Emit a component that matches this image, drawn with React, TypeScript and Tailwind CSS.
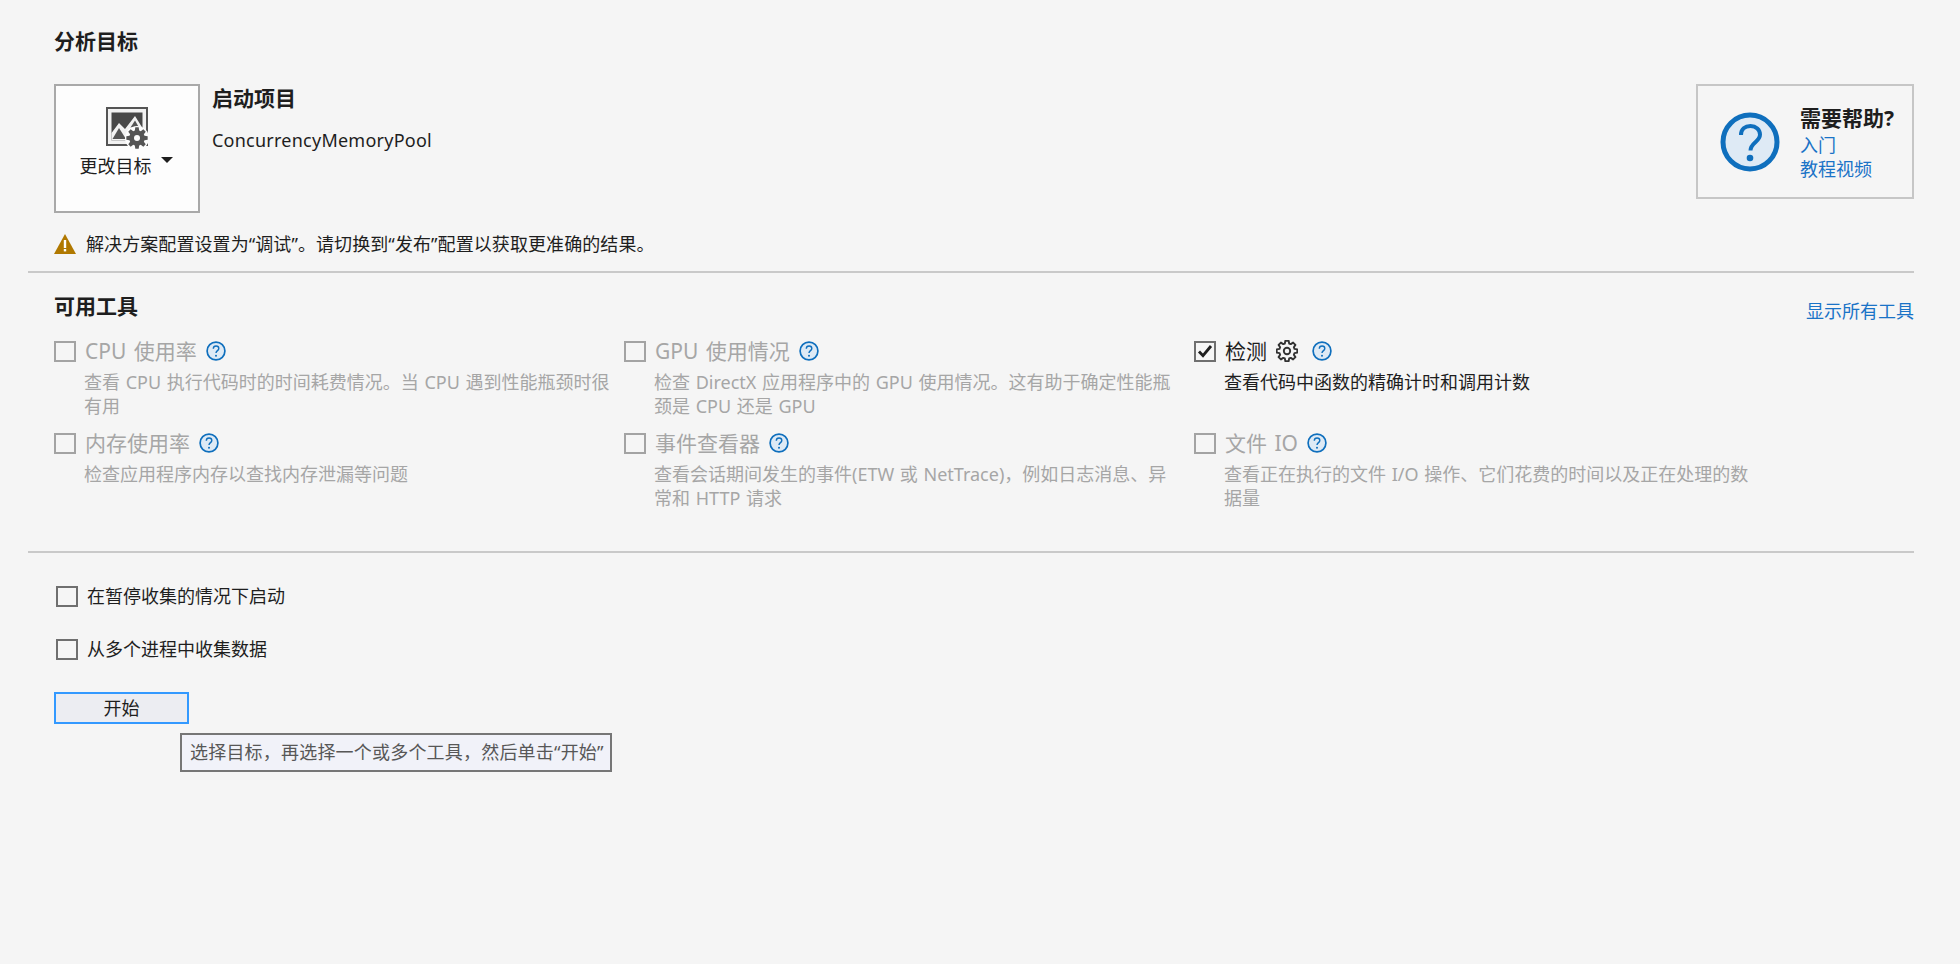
import React from "react";

function gearPath(cx: number, cy: number, ro: number, ri: number, teeth: number) {
  const pts: string[] = [];
  const step = (Math.PI * 2) / teeth;
  for (let i = 0; i < teeth; i++) {
    const a = i * step - Math.PI / 2;
    const list: [number, number][] = [
      [ri, a - step * 0.36],
      [ro, a - step * 0.2],
      [ro, a + step * 0.2],
      [ri, a + step * 0.36],
    ];
    for (const [r, t] of list) pts.push(`${(cx + r * Math.cos(t)).toFixed(2)} ${(cy + r * Math.sin(t)).toFixed(2)}`);
  }
  return "M" + pts.join("L") + "Z";
}

function Help({ className = "" }: { className?: string }) {
  return (
    <svg viewBox="0 0 20 20" className={`w-[20px] h-[20px] shrink-0 ${className}`}>
      <circle cx="10" cy="10" r="8.9" fill="#deeaf5" stroke="#0f6fbd" strokeWidth="1.7" />
      <path d="M7.3 7.7c0-1.600 1.200-2.700 2.800-2.700s2.700 1 2.700 2.400c0 2.200-2.800 2.300-2.800 4.700" fill="none" stroke="#0f6fbd" strokeWidth="1.4" />
      <circle cx="10" cy="14.8" r="1" fill="#0f6fbd" />
    </svg>
  );
}

function Check({ state }: { state: "disabled" | "off" | "on" }) {
  const border = state === "disabled" ? "border-[#a3a3a3]" : "border-[#6f6f6f]";
  return (
    <span className={`w-[22px] h-[21px] shrink-0 border-2 ${border} flex items-center justify-center`}>
      {state === "on" && (
        <svg viewBox="0 0 16 16" className="w-[16px] h-[16px]">
          <path d="M2 8.500l4 4.200L14 3" fill="none" stroke="#1e1e1e" strokeWidth="2.800" />
        </svg>
      )}
    </span>
  );
}

function Tool({
  title,
  desc,
  state = "disabled",
  gear = false,
}: {
  title: string;
  desc: string;
  state?: "disabled" | "on";
  gear?: boolean;
}) {
  const on = state === "on";
  return (
    <div>
      <div className="flex items-center h-[24px]">
        <Check state={state} />
        <span className={`ml-[9px] text-[21px] leading-[24px] [word-spacing:2px] ${on ? "text-[#1e1e1e]" : "text-[#a6a6a6]"}`}>{title}</span>
        {gear && (
          <svg viewBox="0 0 22 22" className="w-[22px] h-[22px] ml-[9px] shrink-0">
            <path d={gearPath(11, 11, 10.4, 7.8, 8)} fill="none" stroke="#333333" strokeWidth="1.9" strokeLinejoin="round" />
            <circle cx="11" cy="11" r="3.2" fill="none" stroke="#333333" strokeWidth="1.9" />
          </svg>
        )}
        <Help className={gear ? "ml-[14px]" : "ml-[9px]"} />
      </div>
      <p className={`mt-[7px] ml-[30px] w-[528px] text-[18px] leading-[24px] [word-spacing:1px] ${on ? "text-[#1e1e1e]" : "text-[#a6a6a6]"}`}>{desc}</p>
    </div>
  );
}

export default function App() {
  return (
    <div className="w-full h-[964px] overflow-hidden bg-[#f5f5f5] pl-[28px] pr-[46px] pt-[27px] text-[18px] text-[#1e1e1e] font-['Noto_Sans','Noto_Sans_CJK_SC',sans-serif]">
      <section className="pl-[26px]">
        <h2 className="text-[21px] leading-[28px] font-bold">分析目标</h2>
        <div className="mt-[29px] flex justify-between items-start">
          <div className="flex items-start">
            <div className="w-[146px] h-[129px] border-2 border-[#a9a9a9] bg-[#fdfdfd] flex flex-col items-center pt-[21px]">
              <svg viewBox="0 0 44 42" className="w-[44px] h-[42px] ml-[2px] shrink-0">
                <rect x="1" y="1" width="40" height="37" fill="#f2f2f2" stroke="#555555" strokeWidth="2" />
                <rect x="5.500" y="5.500" width="31" height="28" fill="#484848" />
                <path d="M5.500 26 L13 16 L19 22 L29 9 L36.500 21 V33.500 H5.500 Z" fill="#f2f2f2" />
                <path d="M6.500 32 L13 21 L20 32 Z" fill="#555555" />
                <path d="M24.500 20.500 L29 13.500 L33 20.500 Z" fill="#555555" />
                <circle cx="31" cy="31" r="12" fill="#fdfdfd" />
                <path d={gearPath(31, 31, 10.8, 7.8, 8)} fill="#555555" />
                <circle cx="31" cy="31" r="3" fill="#fdfdfd" />
              </svg>
              <div className="flex items-start mt-[5px] -ml-[2px]">
                <span className="leading-[24px]">更改目标</span>
                <svg viewBox="0 0 12 6" className="w-[12px] h-[6px] ml-[9px] mt-[3px]">
                  <path d="M0 0H12L6 6Z" fill="#1e1e1e" />
                </svg>
              </div>
            </div>
            <div className="ml-[12px]">
              <h3 className="text-[21px] leading-[28px] font-bold">启动项目</h3>
              <p className="mt-[15px] leading-[26px] tracking-[0.24px]">ConcurrencyMemoryPool</p>
            </div>
          </div>
          <div className="w-[218px] h-[115px] border-2 border-[#c6c6c6] flex items-center pl-[22px]">
            <svg viewBox="0 0 60 60" className="w-[60px] h-[60px] shrink-0">
              <circle cx="30" cy="30" r="27" fill="#deeaf5" stroke="#0f6fbd" strokeWidth="5" />
              <path d="M21 23c0-6 4-9 9.500-9s9.500 3.600 9.500 8.500c0 7.500-9.500 8-9.500 16" fill="none" stroke="#0f6fbd" strokeWidth="4" />
              <circle cx="30" cy="46" r="3.300" fill="#0f6fbd" />
            </svg>
            <div className="ml-[20px] mt-[2px]">
              <div className="text-[21px] leading-[27px] font-bold">需要帮助?</div>
              <div className="mt-[1px] leading-[24px] text-[#1a73c7]">入门</div>
              <div className="leading-[24px] text-[#1a73c7]">教程视频</div>
            </div>
          </div>
        </div>
        <div className="mt-[21px] flex items-center h-[20px]">
          <svg viewBox="0 0 22 20" className="w-[22px] h-[20px] shrink-0">
            <path d="M11 0L22 20H0Z" fill="#b07800" />
            <rect x="9.800" y="6" width="2.400" height="8" fill="#ffffff" />
            <rect x="9.800" y="15" width="2.400" height="2.400" fill="#ffffff" />
          </svg>
          <span className="ml-[10px] leading-[24px] tracking-[0.08px]">解决方案配置设置为“调试”。请切换到“发布”配置以获取更准确的结果。</span>
        </div>
      </section>

      <div className="mt-[17px] h-[2px] bg-[#c9c9c9]" />

      <section className="pl-[26px] mt-[19px]">
        <div className="flex justify-between items-start h-[28px]">
          <h2 className="text-[21px] leading-[28px] font-bold">可用工具</h2>
          <a className="mt-[7px] leading-[24px] text-[#1a73c7]">显示所有工具</a>
        </div>
        <div className="mt-[19px] grid grid-cols-[570px_570px_570px] gap-y-[13px]">
          <Tool title="CPU 使用率" desc="查看 CPU 执行代码时的时间耗费情况。当 CPU 遇到性能瓶颈时很有用" />
          <Tool title="GPU 使用情况" desc="检查 DirectX 应用程序中的 GPU 使用情况。这有助于确定性能瓶颈是 CPU 还是 GPU" />
          <Tool title="检测" state="on" gear desc="查看代码中函数的精确计时和调用计数" />
          <Tool title="内存使用率" desc="检查应用程序内存以查找内存泄漏等问题" />
          <Tool title="事件查看器" desc="查看会话期间发生的事件(ETW 或 NetTrace)，例如日志消息、异常和 HTTP 请求" />
          <Tool title="文件 IO" desc="查看正在执行的文件 I/O 操作、它们花费的时间以及正在处理的数据量" />
        </div>
      </section>

      <div className="mt-[41px] h-[2px] bg-[#c9c9c9]" />

      <section className="pl-[26px] mt-[31px]">
        <label className="flex items-center h-[24px] ml-[2px]">
          <Check state="off" />
          <span className="ml-[9px] leading-[24px]">在暂停收集的情况下启动</span>
        </label>
        <label className="flex items-center h-[24px] ml-[2px] mt-[29px]">
          <Check state="off" />
          <span className="ml-[9px] leading-[24px]">从多个进程中收集数据</span>
        </label>
        <div className="relative mt-[31px] w-[135px]">
          <button className="w-[135px] h-[32px] border-2 border-[#3399ff] bg-[#ecedf2] text-[18px] leading-[24px]">开始</button>
          <div className="absolute left-[126px] top-[41px] w-[432px] h-[39px] border-2 border-[#767676] bg-[#f1f2f9] text-[#575757] pl-[8px] leading-[35px] whitespace-nowrap tracking-[0.2px]">
            选择目标，再选择一个或多个工具，然后单击“开始”
          </div>
        </div>
      </section>
    </div>
  );
}
